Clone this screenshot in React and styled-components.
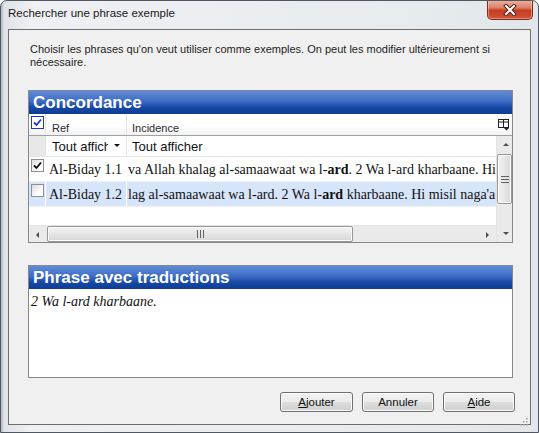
import styled, { createGlobalStyle } from "styled-components";

const GlobalStyle = createGlobalStyle`
  html, body { margin: 0; padding: 0; background: #ffffff; }
  body { font-family: "Liberation Sans", Arial, sans-serif; }
  * { box-sizing: border-box; }
`;

const Frame = styled.div`
  width: 539px;
  height: 433px;
  display: flex;
  flex-direction: column;
  border: 1px solid #4f5762;
  border-radius: 7px 7px 0 0;
  background: linear-gradient(90deg, #aeb5bd 0px, #dfe3e7 3px, #eef0f3 30px, #e9ecef 70%, #e2e6ea 100%);
  overflow: hidden;
`;

const TitleBar = styled.div`
  height: 28px;
  display: flex;
  align-items: flex-start;
  padding-left: 7px;
`;

const TitleText = styled.div`
  padding-top: 6px;
  font-size: 11.5px;
  color: #1a1a1a;
`;

const CloseButton = styled.div`
  margin-left: auto;
  margin-right: 5px;
  margin-top: -1px;
  width: 46px;
  height: 20px;
  border: 1px solid #7d2b1c;
  border-top: none;
  border-radius: 0 0 5px 5px;
  background: linear-gradient(#edb3a2 0%, #dc8266 40%, #c63c22 55%, #cf5535 100%);
  box-shadow: inset 0 0 0 1px rgba(255, 255, 255, 0.35);
  display: flex;
  align-items: center;
  justify-content: center;
`;

const Client = styled.div`
  position: relative;
  flex: 1;
  margin: 0 7px 7px 7px;
  border: 1px solid #6e6e6e;
  background: #f0f0f0;
  display: flex;
  flex-direction: column;
  padding: 13px 17px 0 19px;
`;

const Intro = styled.p`
  margin: 0 0 0 2px;
  font-size: 11px;
  line-height: 13px;
  color: #1e1e1e;
`;

const Panel = styled.div`
  margin-top: ${(p) => p.$gap}px;
  height: ${(p) => p.$h}px;
  border: 1px solid #828790;
  background: #ffffff;
  display: flex;
  flex-direction: column;
`;

const PanelHeader = styled.div`
  height: 23px;
  flex: none;
  padding-left: 4px;
  display: flex;
  align-items: center;
  background: linear-gradient(#5f8bd8 0%, #3e6cc4 45%, #1849a6 70%, #0d3c93 100%);
  color: #ffffff;
  font-weight: bold;
  font-size: 17px;
`;

const Grid = styled.div`
  flex: 1;
  display: flex;
  min-height: 0;
`;

const GridMain = styled.div`
  flex: 1;
  display: flex;
  flex-direction: column;
  min-width: 0;
`;

const Row = styled.div`
  display: flex;
  height: ${(p) => p.$h}px;
  flex: none;
  background: ${(p) => p.$bg || "#ffffff"};
  border-bottom: 1px solid ${(p) => p.$line || "#e6e9ee"};
`;

const Cell = styled.div`
  width: ${(p) => (p.$w ? `${p.$w}px` : "auto")};
  flex: ${(p) => (p.$w ? "none" : "1")};
  min-width: 0;
  overflow: hidden;
  white-space: nowrap;
  display: flex;
  align-items: ${(p) => p.$align || "center"};
  padding-left: ${(p) => p.$pad ?? 3}px;
  background: ${(p) => p.$bg || "transparent"};
  border-right: ${(p) => (p.$sep ? `1px solid ${p.$sep}` : "none")};
`;

const HeadLabel = styled.span`
  font-size: 11px;
  color: #2b2b2b;
  padding-top: 8px;
`;

const FilterText = styled.span`
  font-size: 13px;
  color: #111111;
  width: ${(p) => (p.$clip ? `${p.$clip}px` : "auto")};
  overflow: hidden;
`;

const DropArrow = styled.span`
  margin-left: auto;
  margin-right: 5px;
  display: flex;
`;

const SerifText = styled.span`
  font-family: "Liberation Serif", "Times New Roman", serif;
  font-size: 14px;
  color: #111111;
  padding-top: ${(p) => p.$top ?? 2}px;
  font-style: ${(p) => (p.$italic ? "italic" : "normal")};
`;

const Box = styled.div`
  width: 13px;
  height: 13px;
  margin-top: ${(p) => p.$top ?? 0}px;
  border: 1px solid ${(p) => (p.$blue ? "#1b38d6" : "#8e8f8f")};
  background: ${(p) => (p.$blue ? "#ffffff" : "linear-gradient(135deg, #dcdcdc, #ffffff 70%)")};
  display: flex;
  align-items: center;
  justify-content: center;
`;

const Filler = styled.div`
  flex: 1;
  background: #ffffff;
`;

const HScroll = styled.div`
  height: 17px;
  flex: none;
  display: flex;
  background: #eaeaea;
  border-top: 1px solid #e3e3e3;
`;

const ArrowBtn = styled.div`
  width: 17px;
  height: 17px;
  flex: none;
  display: flex;
  align-items: center;
  justify-content: center;
`;

const Track = styled.div`
  flex: 1;
  display: flex;
  flex-direction: ${(p) => (p.$vertical ? "column" : "row")};
  padding: ${(p) => (p.$vertical ? "1px 0" : "0 1px")};
`;

const Thumb = styled.div`
  ${(p) => (p.$vertical ? "height" : "width")}: ${(p) => p.$size}px;
  flex: none;
  border: 1px solid #989898;
  border-radius: 2px;
  background: ${(p) =>
    p.$vertical
      ? "linear-gradient(90deg, #f3f3f3, #e6e6e6 50%, #d8d8d8)"
      : "linear-gradient(#f3f3f3, #e6e6e6 50%, #d6d6d6)"};
  box-shadow: inset 0 0 0 1px #fbfbfb;
  display: flex;
  align-items: center;
  justify-content: center;
`;

const SideColumn = styled.div`
  width: 16px;
  flex: none;
  display: flex;
  flex-direction: column;
`;

const Chooser = styled.div`
  height: 22px;
  flex: none;
  display: flex;
  align-items: center;
  justify-content: center;
  background: linear-gradient(#ffffff, #f3f4f6);
  border-bottom: 1px solid #a0a0a0;
`;

const VScroll = styled.div`
  flex: 1;
  display: flex;
  flex-direction: column;
  background: #eaeaea;
  border-left: 1px solid #e3e3e3;
`;

const PhraseBody = styled.div`
  flex: 1;
  padding: 3px 2px;
`;

const ButtonRow = styled.div`
  margin-top: 14px;
  margin-right: -2px;
  display: flex;
  justify-content: flex-end;
  gap: 9px;
`;

const Button = styled.div`
  width: ${(p) => p.$w}px;
  height: 20px;
  border: 1px solid #707070;
  border-radius: 3px;
  background: linear-gradient(#f2f2f2 0%, #ebebeb 50%, #dddddd 51%, #cfcfcf 100%);
  box-shadow: inset 0 0 0 1px #fcfcfc;
  display: flex;
  align-items: center;
  justify-content: center;
  font-size: 11.5px;
  color: #111111;
`;

const Grip = styled.div`
  position: absolute;
  right: 2px;
  bottom: 2px;
  width: 10px;
  height: 10px;
`;

const Tri = ({ dir, color = "#4d4d4d" }) => {
  const pts = {
    up: "1,5 4,2 7,5",
    down: "1,2 4,5 7,2",
    left: "5,1 2,4 5,7",
    right: "2,1 5,4 2,7",
  }[dir];
  return (
    <svg width="8" height="8" viewBox="0 0 8 8">
      <polygon points={pts} fill={color} />
    </svg>
  );
};

const GripLines = ({ vertical }) => (
  <svg width={vertical ? 8 : 7} height={vertical ? 7 : 8} viewBox={vertical ? "0 0 8 7" : "0 0 7 8"}>
    {[0, 3, 6].map((o) =>
      vertical ? (
        <line key={o} x1="0" y1={o + 0.5} x2="8" y2={o + 0.5} stroke="#606060" strokeWidth="1" />
      ) : (
        <line key={o} x1={o + 0.5} y1="0" x2={o + 0.5} y2="8" stroke="#606060" strokeWidth="1" />
      )
    )}
  </svg>
);

const Check = ({ color }) => (
  <svg width="9" height="9" viewBox="0 0 9 9">
    <path d="M1 4.5 L3.5 7 L8 1.5" fill="none" stroke={color} strokeWidth="1.8" />
  </svg>
);

const rows = [
  {
    ref: "Al-Biday 1.1",
    checked: true,
    text: (
      <>
        va Allah khalag al-samaawaat wa l-<b>ard</b>. 2 Wa l-ard kharbaane. Hi
      </>
    ),
  },
  {
    ref: "Al-Biday 1.2",
    checked: false,
    selected: true,
    text: (
      <>
        lag al-samaawaat wa l-ard. 2 Wa l-<b>ard</b> kharbaane. Hi misil naga&apos;a
      </>
    ),
  },
];

export default function App() {
  return (
    <>
      <GlobalStyle />
      <Frame>
        <TitleBar>
          <TitleText>Rechercher une phrase exemple</TitleText>
          <CloseButton>
            <svg width="14" height="12" viewBox="0 0 14 12">
              <path d="M3 2 L11 10 M11 2 L3 10" stroke="#5a2116" strokeWidth="4" strokeLinecap="square" />
              <path d="M3 2 L11 10 M11 2 L3 10" stroke="#ffffff" strokeWidth="2" strokeLinecap="square" />
            </svg>
          </CloseButton>
        </TitleBar>

        <Client>
          <Intro>
            Choisir les phrases qu&apos;on veut utiliser comme exemples. On peut les modifier ultérieurement si
            <br />
            nécessaire.
          </Intro>

          <Panel $gap={21} $h={153}>
            <PanelHeader>Concordance</PanelHeader>
            <Grid>
              <GridMain>
                <Row $h={22} $bg="linear-gradient(#ffffff, #ffffff 55%, #f1f2f4)" $line="#a0a0a0">
                  <Cell $w={17} $pad={2} $sep="#e2e2e2" $align="flex-start">
                    <Box $blue $top={2}>
                      <Check color="#1b38d6" />
                    </Box>
                  </Cell>
                  <Cell $w={81} $pad={6} $sep="#e2e2e2" $align="flex-start">
                    <HeadLabel>Ref</HeadLabel>
                  </Cell>
                  <Cell $pad={5} $align="flex-start">
                    <HeadLabel>Incidence</HeadLabel>
                  </Cell>
                </Row>
                <Row $h={21} $line="#e3e6eb">
                  <Cell $w={17} $bg="#e8e8e8" $sep="#e3e3e3" />
                  <Cell $w={81} $pad={6} $sep="#e3e3e3">
                    <FilterText $clip={56}>Tout afficher</FilterText>
                    <DropArrow>
                      <Tri dir="down" color="#111" />
                    </DropArrow>
                  </Cell>
                  <Cell $pad={5}>
                    <FilterText>Tout afficher</FilterText>
                  </Cell>
                </Row>
                {rows.map((r) => (
                  <Row key={r.ref} $h={25} $bg={r.selected ? "#d6e5fa" : "#ffffff"} $line="#eef1f5">
                    <Cell $w={17} $pad={2} $sep="#ffffff" $align="flex-start">
                      <Box $top={2}>{r.checked && <Check color="#111111" />}</Box>
                    </Cell>
                    <Cell $w={81} $pad={3} $sep="#ffffff">
                      <SerifText>{r.ref}</SerifText>
                    </Cell>
                    <Cell $pad={1}>
                      <SerifText>{r.text}</SerifText>
                    </Cell>
                  </Row>
                ))}
                <Filler />
                <HScroll>
                  <ArrowBtn>
                    <Tri dir="left" />
                  </ArrowBtn>
                  <Track>
                    <Thumb $size={306}>
                      <GripLines />
                    </Thumb>
                  </Track>
                  <ArrowBtn>
                    <Tri dir="right" />
                  </ArrowBtn>
                </HScroll>
              </GridMain>
              <SideColumn>
                <Chooser>
                  <svg width="12" height="12" viewBox="0 0 12 12">
                    <rect x="0.5" y="0.5" width="10" height="8" fill="#fff" stroke="#222" />
                    <line x1="0.5" y1="3" x2="10.5" y2="3" stroke="#222" />
                    <line x1="5.5" y1="0.5" x2="5.5" y2="8.5" stroke="#222" />
                    <polygon points="6,9 11,9 8.5,11.5" fill="#222" />
                  </svg>
                </Chooser>
                <VScroll>
                  <ArrowBtn>
                    <Tri dir="up" />
                  </ArrowBtn>
                  <Track $vertical>
                    <Thumb $vertical $size={50}>
                      <GripLines vertical />
                    </Thumb>
                  </Track>
                  <ArrowBtn>
                    <Tri dir="down" />
                  </ArrowBtn>
                </VScroll>
              </SideColumn>
            </Grid>
          </Panel>

          <Panel $gap={22} $h={113}>
            <PanelHeader>Phrase avec traductions</PanelHeader>
            <PhraseBody>
              <SerifText $italic $top={0}>
                2 Wa l-ard kharbaane.
              </SerifText>
            </PhraseBody>
          </Panel>

          <ButtonRow>
            <Button $w={73}>
              <span>
                <u>A</u>jouter
              </span>
            </Button>
            <Button $w={72}>Annuler</Button>
            <Button $w={72}>
              <span>
                <u>A</u>ide
              </span>
            </Button>
          </ButtonRow>

          <Grip>
            <svg width="10" height="10" viewBox="0 0 10 10">
              {[
                [8, 2],
                [8, 5],
                [5, 5],
                [8, 8],
                [5, 8],
                [2, 8],
              ].map(([x, y]) => (
                <rect key={`${x}-${y}`} x={x} y={y} width="1.5" height="1.5" fill="#a0a0a0" />
              ))}
            </svg>
          </Grip>
        </Client>
      </Frame>
    </>
  );
}
